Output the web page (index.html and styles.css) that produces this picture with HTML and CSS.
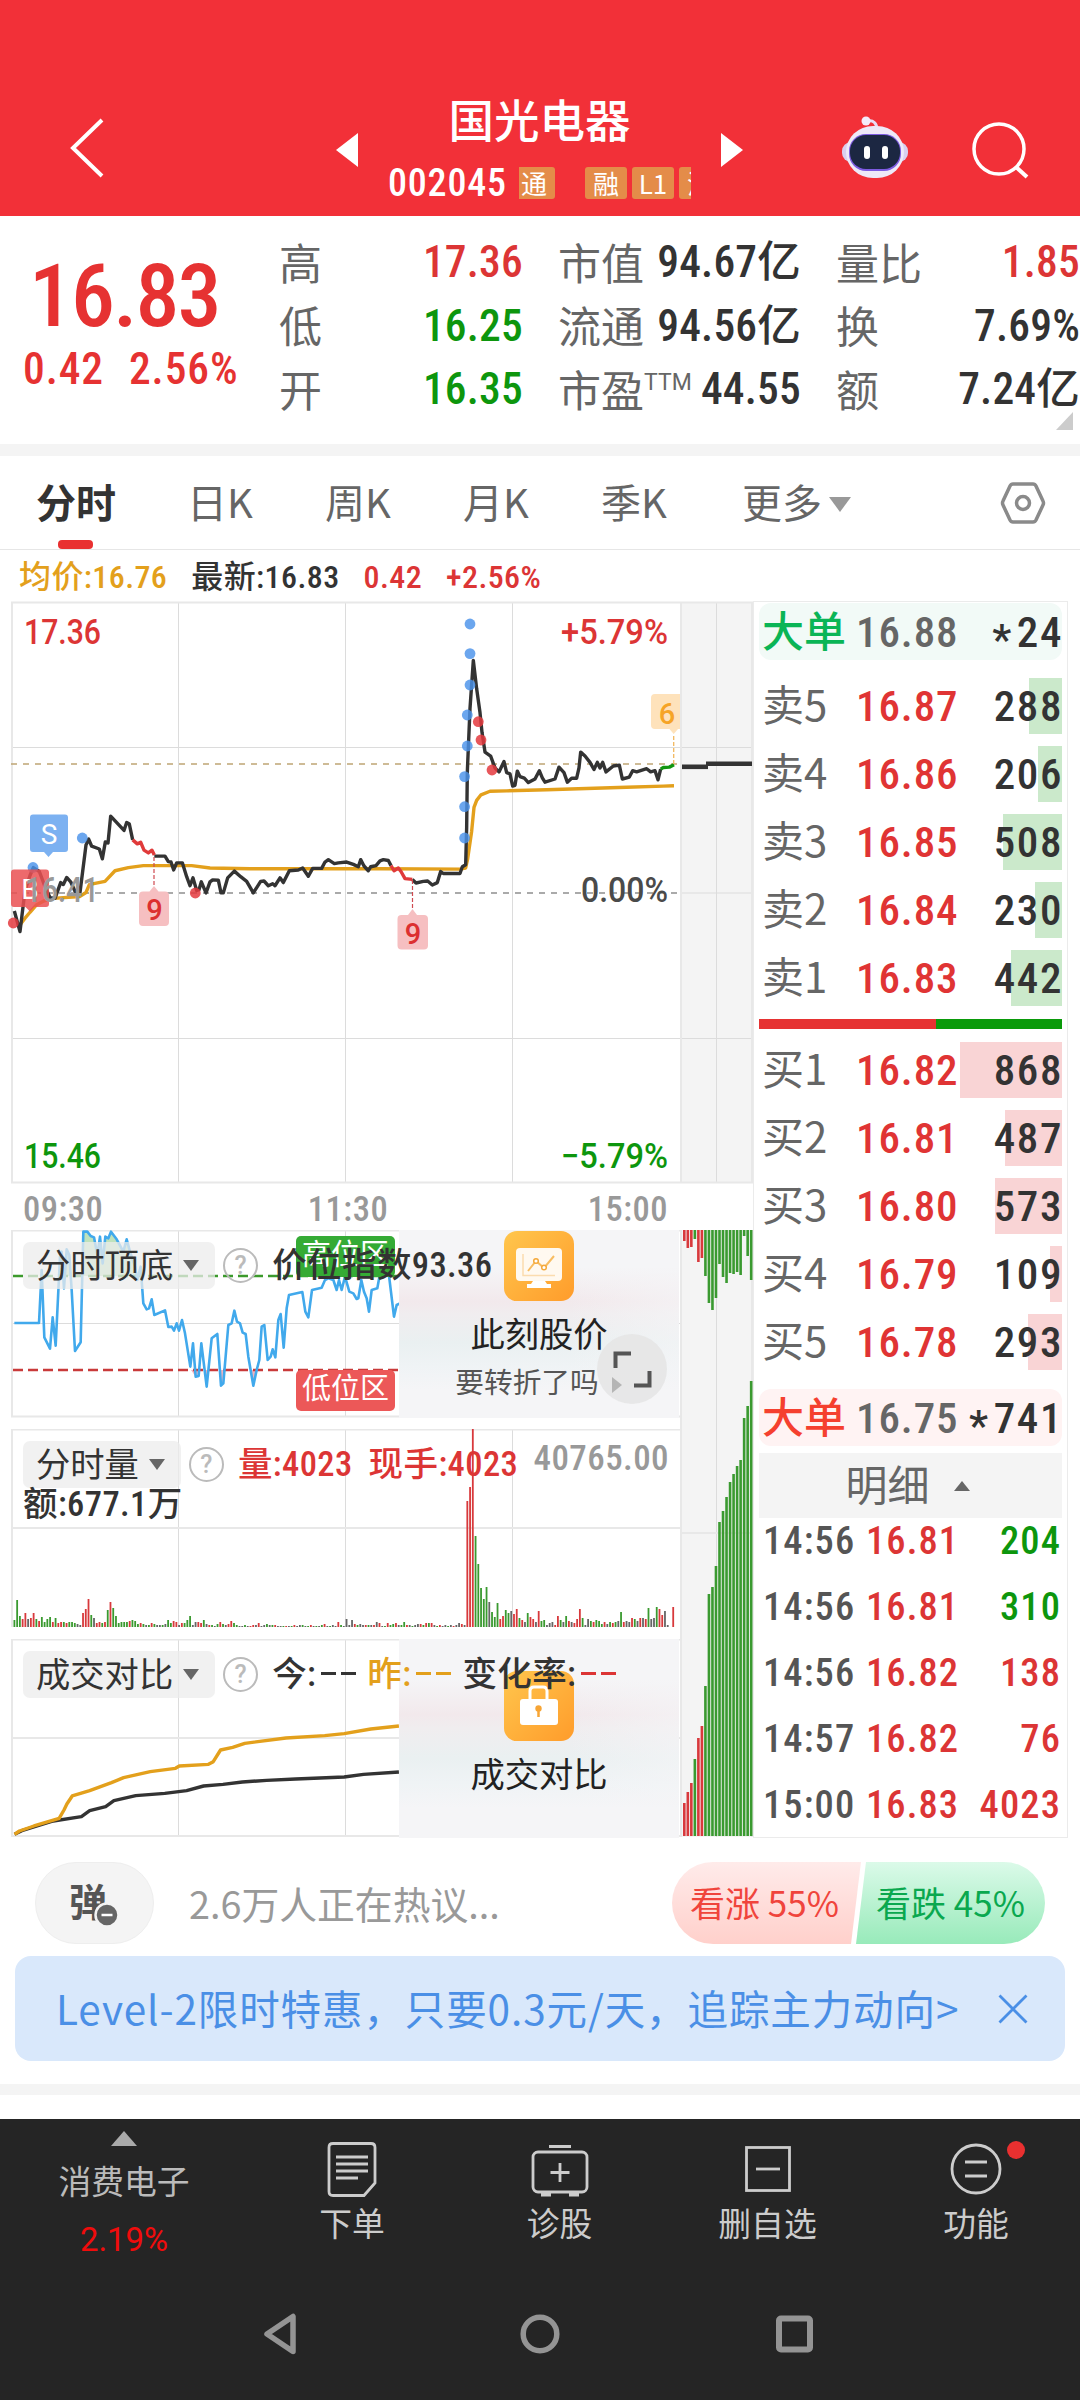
FILE: index.html
```html
<!DOCTYPE html>
<html lang="zh-CN">
<head>
    <meta charset="UTF-8">
    <meta name="viewport" content="width=device-width, initial-scale=1.0">
    <title>国光电器 002045</title>
    <link rel="stylesheet" href="styles.css">
</head>
<body>
    <div class="app">
        <!-- 顶部栏 -->
        <header class="header">
            <svg class="back" width="40" height="64" viewBox="0 0 40 64"><path d="M35 4L6 32L35 60" fill="none" stroke="#fff" stroke-width="4"/></svg>
            <svg class="prev" width="22" height="34" viewBox="0 0 22 34"><path d="M22 0V34L0 17Z" fill="#fff"/></svg>
            <div class="stock">
                <h1>国光电器</h1>
                <div class="stock-code">
                    <span class="num">002045</span>
                    <div class="chips">
                        <i class="chip chip-cut">通</i>
                        <i class="chip">融</i>
                        <i class="chip">L1</i>
                        <i class="chip">沪</i>
                    </div>
                </div>
            </div>
            <svg class="next" width="22" height="34" viewBox="0 0 22 34"><path d="M0 0V34L22 17Z" fill="#fff"/></svg>
            <svg class="robot" width="68" height="64" viewBox="0 0 68 64">
                <path d="M36 14C36 7 32 4 27 5" fill="none" stroke="#e8ddf5" stroke-width="3"/>
                <circle cx="25" cy="5" r="4.5" fill="#f4ecfa"/>
                <rect x="1" y="26" width="66" height="20" rx="9" fill="#d9cff0"/>
                <rect x="5" y="10" width="58" height="52" rx="27" fill="#eee9f8"/>
                <rect x="8" y="18" width="52" height="37" rx="17" fill="#7d5be0"/>
                <rect x="9" y="19" width="50" height="34" rx="16" fill="#1c2742"/>
                <rect x="23" y="30" width="6" height="13" rx="3" fill="#fff"/>
                <rect x="41" y="30" width="6" height="13" rx="3" fill="#fff"/>
            </svg>
            <svg class="search" width="58" height="58" viewBox="0 0 58 58"><circle cx="28" cy="28" r="25" fill="none" stroke="#fff" stroke-width="3.5"/><path d="M45 46L56 56" stroke="#fff" stroke-width="4"/></svg>
        </header>

        <!-- 行情 -->
        <section class="quote">
            <div class="price">
                <div class="price-now num">16.83</div>
                <div class="price-chg num"><span>0.42</span><span>2.56%</span></div>
            </div>
            <div class="stats">
                <div class="stat"><span>高</span><b class="num red">17.36</b></div>
                <div class="stat"><span>市值</span><b class="num">94.67亿</b></div>
                <div class="stat"><span>量比</span><b class="num red">1.85</b></div>
                <div class="stat"><span>低</span><b class="num green">16.25</b></div>
                <div class="stat"><span>流通</span><b class="num">94.56亿</b></div>
                <div class="stat"><span>换</span><b class="num">7.69%</b></div>
                <div class="stat"><span>开</span><b class="num green">16.35</b></div>
                <div class="stat"><span>市盈<sup>TTM</sup></span><b class="num">44.55</b></div>
                <div class="stat"><span>额</span><b class="num">7.24亿</b></div>
            </div>
            <i class="corner"></i>
        </section>

        <!-- 周期切换 -->
        <nav class="tabs">
            <a class="tab active">分时</a>
            <a class="tab">日K</a>
            <a class="tab">周K</a>
            <a class="tab">月K</a>
            <a class="tab">季K</a>
            <a class="tab more">更多<i class="down"></i></a>
            <svg class="setting" width="46" height="42" viewBox="0 0 46 42"><path d="M13 2H33Q35 2 36 4L43 19Q44 21 43 23L36 38Q35 40 33 40H13Q11 40 10 38L3 23Q2 21 3 19L10 4Q11 2 13 2Z" fill="none" stroke="#8a8a8a" stroke-width="3.5"/><circle cx="23" cy="21" r="6.5" fill="none" stroke="#8a8a8a" stroke-width="3.5"/></svg>
        </nav>

        <div class="info num">
            <span class="orange">均价:16.76</span>
            <span>最新:16.83</span>
            <span class="red">0.42</span>
            <span class="red">+2.56%</span>
        </div>

        <main class="trade">
            <div class="charts">
                <!-- 分时图 -->
                <svg class="main-chart" width="753" height="583" viewBox="0 601 753 583">
                    <rect x="680" y="602" width="73" height="581" fill="#f4f4f4"/>
                    <g class="grid">
                        <path d="M178.5 602V1183M345.5 602V1183M512.5 602V1183M716.5 602V1183M11 747.5H753M681 893H753M11 1038.5H753"/>
                        <path class="frame" d="M11 602.5H753M12 602V1183M681 602V1183M752 602V1183M11 1182.5H753"/>
                    </g>
                    <path d="M11 764H680" class="dash" stroke="#bfa574"/>
                    <path d="M11 893H680" class="dash" stroke="#8f8f8f"/>
                    <g class="lines" transform="translate(0 590) scale(.33333 .3954)">
                        <polyline stroke="#e3a01c" points="62,845 75,830 90,815 110,796 130,787 160,780 240,775 258,765 268,745 285,742 315,737 345,710 385,702 430,697 575,697 630,703 750,705 1140,705 1380,706 1397,703 1403,680 1415,610 1422,550 1430,532 1443,518 1470,509 1520,508 1640,505 1760,502 1880,499 1990,496 2022,495"/>
                        <polyline stroke="#333" points="43,812 60,864 75,760 90,722 100,702 118,712 135,750 150,778 165,780 182,740 190,745 200,727 212,738 225,762 240,765 258,645 266,630 275,648 298,655 307,680 316,637 324,640 332,572 372,608 380,588 388,592 398,632"/>
                        <polyline stroke="#333" points="463,673 495,673 505,687 513,688 521,708 530,690 547,690 560,725 570,748 579,728 590,760 597,758 604,738 618,766 630,738 638,733 655,734 663,766 670,766 683,728 703,711 722,725 740,737 760,766 782,737 792,736 805,748 818,743 825,748 840,728 850,740 868,710 895,708 908,703 925,724 938,704 965,704 975,688 985,682 1003,692 1015,690 1040,688 1060,694 1075,700 1082,682 1092,698 1105,710 1112,700 1128,697 1140,685 1150,682 1165,684 1173,697"/>
                        <polyline stroke="#333" points="1237,732 1248,741 1270,737 1283,736 1297,746 1312,740 1322,712 1330,717 1380,717 1387,700 1397,695 1400,600 1402,460 1410,300 1420,178 1430,250 1440,310 1446,360 1455,410 1472,420 1485,450 1497,460 1512,434 1520,462 1530,465 1538,496 1545,494 1552,458 1560,472 1573,476 1585,487 1605,478 1618,457 1627,475 1635,486 1665,478 1677,448 1692,462 1702,486 1715,476 1730,476 1737,450 1742,410 1755,420 1770,436 1782,454 1792,436 1800,450 1808,436 1818,460 1840,445 1858,443 1867,478 1888,473 1898,457 1910,460 1940,452 1952,460 1965,457 1974,480 1982,453"/>
                        <polyline stroke="#e03a3a" points="398,632 412,642 422,638 432,658 445,665 456,658 463,670"/>
                        <polyline stroke="#e03a3a" points="1173,697 1182,710 1195,703 1203,712 1215,730 1237,732"/>
                        <polyline stroke="#12960f" points="1982,453 1990,449 2008,448 2022,442"/>
                    </g>
                    <path d="M682 766.8H708" stroke="#333" stroke-width="4.6"/>
                    <path d="M706 763.8H752" stroke="#333" stroke-width="4.6"/>
                    <g fill="#4a92ea" fill-opacity=".82">
                        <circle cx="33" cy="867.5" r="5.4"/><circle cx="82.3" cy="838" r="5.4"/>
                        <circle cx="470" cy="624" r="5.4"/><circle cx="470" cy="653.6" r="5.4"/>
                        <circle cx="470" cy="685" r="5.4"/><circle cx="467.3" cy="715" r="5.4"/>
                        <circle cx="467.3" cy="746" r="5.4"/><circle cx="464.6" cy="776.6" r="5.4"/>
                        <circle cx="464.6" cy="806.7" r="5.4"/><circle cx="464.6" cy="838" r="5.4"/>
                    </g>
                    <g fill="#e43a3e" fill-opacity=".85">
                        <circle cx="13.3" cy="923" r="5.4"/><circle cx="195.3" cy="893" r="5.4"/>
                        <circle cx="478.3" cy="721.7" r="5.4"/><circle cx="481" cy="740" r="5.4"/><circle cx="492" cy="770" r="5.4"/>
                    </g>
                    <!-- 买卖点标记 -->
                    <path d="M33 814.5H65Q68 814.5 68 817.5V849Q68 852 65 852H53L48.5 857L44 852H33Q30 852 30 849V817.5Q30 814.5 33 814.5Z" fill="#6ea8f0" fill-opacity=".9"/>
                    <text x="49" y="843.5" font-size="28" fill="#fff" text-anchor="middle">S</text>
                    <path d="M14 869.5H46Q49 869.5 49 872.5V904Q49 907 46 907H34.5L30 911.5L25.5 907H14Q11 907 11 904V872.5Q11 869.5 14 869.5Z" fill="#ea5052" fill-opacity=".85"/>
                    <text x="30" y="898.5" font-size="28" fill="#fff" text-anchor="middle">B</text>
                    <path d="M154 857V886M412.5 880V909" stroke="#cf4a50" stroke-width="1.2" stroke-dasharray="4 2"/>
                    <path d="M143 891.5H149.5L154 886L158.5 891.5H165Q169 891.5 169 895.5V922Q169 926 165 926H143Q139 926 139 922V895.5Q139 891.5 143 891.5Z" fill="#f6bfc1"/>
                    <path d="M401.5 915H408L412.5 909L417 915H424Q428 915 428 919V945.5Q428 949.5 424 949.5H401.5Q397.5 949.5 397.5 945.5V919Q397.5 915 401.5 915Z" fill="#f6bfc1"/>
                    <text x="154.5" y="919.5" font-size="29" class="mid red-t" text-anchor="middle">9</text>
                    <text x="413" y="943.5" font-size="29" class="mid red-t" text-anchor="middle">9</text>
                    <path d="M673.7 736V765" stroke="#f2b860" stroke-width="1.3" stroke-dasharray="4 2"/>
                    <path d="M655 694H680V729H678L673.7 734L669.5 729H655Q651 729 651 725V698Q651 694 655 694Z" fill="#fee2bb"/>
                    <text x="667" y="723.5" font-size="29" class="mid" fill="#f6a426" text-anchor="middle">6</text>
                    <g class="mid" font-size="35">
                        <text x="24" y="644" fill="#dc3535" textLength="77" lengthAdjust="spacingAndGlyphs">17.36</text>
                        <text x="561" y="644" fill="#dc3535" textLength="107" lengthAdjust="spacingAndGlyphs">+5.79%</text>
                        <text x="25" y="901.5" fill="#999" textLength="74" lengthAdjust="spacingAndGlyphs">16.41</text>
                        <text x="581" y="901.5" fill="#4a4a4a" textLength="87" lengthAdjust="spacingAndGlyphs">0.00%</text>
                        <text x="24" y="1168" fill="#0d960d" textLength="77" lengthAdjust="spacingAndGlyphs">15.46</text>
                        <text x="561" y="1168" fill="#0d960d" textLength="107" lengthAdjust="spacingAndGlyphs">−5.79%</text>
                    </g>
                </svg>
                <div class="axis num"><span>09:30</span><span>11:30</span><span>15:00</span></div>

                <div class="subs">
                    <div class="panels">
                        <!-- 分时顶底 -->
                        <div class="panel p1">
                            <svg width="680" height="188" viewBox="0 1230 680 188">
                                <g class="grid">
                                    <path d="M178.5 1230V1417M345.5 1230V1417M512.5 1230V1417M11 1323.5H680"/>
                                    <path class="frame" d="M11 1230.5H680M12 1230V1417M11 1416.5H680"/>
                                </g>
                                <g transform="translate(0 1180) scale(.33333)">
                                    <path fill="#a9d8a6" fill-opacity=".75" d="M245 288L250 155L262 155L272 168L282 172L292 225L300 170L308 250L316 170L325 175L333 155L350 178L370 215L380 178L390 215L405 260L410 288ZM181 288L185 215L190 288ZM194 288L200 208L208 225L212 288Z"/>
                                    <path fill="#f0b4c0" d="M573 570L587 590L596 588L599 570ZM612 570L620 620L626 570ZM658 570L663 617L670 610L674 570ZM752 570L760 617L770 570Z"/>
                                </g>
                                <path d="M13 1276H400" stroke="#3c9a2c" stroke-width="2.6" stroke-dasharray="10 5"/>
                                <path d="M13 1370H400" stroke="#c93a3a" stroke-width="2.6" stroke-dasharray="10 5"/>
                                <g class="lines thin" transform="translate(0 1180) scale(.33333)">
                                    <polyline stroke="#41a9ec" points="43,429 117,429 125,270 133,472 150,506 158,412 167,497 180,230 185,215 192,325 200,208 208,225 215,330 225,513 242,487 250,155 262,155 272,168 282,172 292,225 300,170 308,250 316,170 325,175 333,155 350,178 370,215 380,178 390,215 405,260 412,300 422,260 430,370 440,388 447,385 455,358 463,405 495,391 505,441 515,440 522,452 530,430 537,452 546,420 555,460 571,560 579,490 587,590 596,588 604,490 620,620 635,475 652,462 663,617 670,610 685,435 695,430 703,392 711,425 720,430 728,458 737,462 745,530 760,617 770,570 778,540 785,440 793,435 803,540 812,530 818,508 826,532 835,420 842,402 851,503 860,385 867,345 907,336 916,395 925,412 936,330 965,323 975,300 985,295 1000,300 1010,330 1017,300 1025,330 1035,290 1048,335 1060,340 1070,357 1075,355 1084,300 1092,335 1100,355 1107,395 1115,330 1132,325 1142,270 1165,270 1182,410 1190,375 1200,370"/>
                                </g>
                            </svg>
                            <span class="zone high">高位区</span>
                            <span class="zone low">低位区</span>
                            <div class="card">
                                <svg width="70" height="70" viewBox="0 0 70 70">
                                    <defs><linearGradient id="og" x1="0" y1="0" x2="1" y2="1"><stop offset="0" stop-color="#ffc64d"/><stop offset="1" stop-color="#ff9c2b"/></linearGradient></defs>
                                    <rect width="70" height="70" rx="13" fill="url(#og)"/>
                                    <rect x="12" y="17" width="46" height="33" rx="4" fill="#fff9f0"/>
                                    <path d="M29 50H41L43 53H47V57H23V53H27Z" fill="#fff"/>
                                    <path d="M19 23V44.5H51" fill="none" stroke="#fbdcae" stroke-width="1.5"/>
                                    <path d="M24 40L32 30L40 37L50 25" fill="none" stroke="#f8bd62" stroke-width="2"/>
                                    <circle cx="32" cy="30" r="2.3" fill="#fff" stroke="#f5a93a" stroke-width="1.5"/><circle cx="40" cy="36.5" r="2.3" fill="#fff" stroke="#f5a93a" stroke-width="1.5"/>
                                </svg>
                                <strong>此刻股价</strong>
                                <em>要转折了吗</em>
                            </div>
                            <div class="panel-head">
                                <span class="pill"><span>分时顶底</span><i class="down"></i></span>
                                <i class="help">?</i>
                                <span class="num val">价位指数93.36</span>
                            </div>
                            <svg class="expand" width="70" height="70" viewBox="0 0 70 70"><circle cx="35" cy="35" r="35" fill="#e6e6e6" fill-opacity=".9"/><path d="M15 43L25 51L15 59Z" fill="#b5b5b5"/><path d="M18.5 34V19.5H34M52.5 37V51.5H37" fill="none" stroke="#555" stroke-width="4"/></svg>
                        </div>
                        <!-- 分时量 -->
                        <div class="panel p2">
                            <svg width="680" height="199" viewBox="0 1429 680 199">
                                <g class="grid">
                                    <path d="M178.5 1429V1627M345.5 1429V1627M512.5 1429V1627"/>
                                    <path class="frame" d="M11 1429.5H680M12 1429V1627M11 1528H680"/>
                                </g>
                                <g id="volume"></g>
                            </svg>
                            <div class="panel-head">
                                <span class="pill"><span>分时量</span><i class="down"></i></span>
                                <i class="help">?</i>
                                <span class="num val red">量:4023</span>
                                <span class="num val red now">现手:4023</span>
                            </div>
                            <span class="num val amount">额:677.1万</span>
                            <span class="num max">40765.00</span>
                        </div>
                        <!-- 成交对比 -->
                        <div class="panel p3">
                            <svg width="680" height="199" viewBox="0 1639 680 199">
                                <g class="grid">
                                    <path d="M178.5 1639V1837M345.5 1639V1837"/>
                                    <path class="frame" d="M11 1639.5H680M12 1639V1837M11 1738H680M11 1836H680"/>
                                </g>
                                <g class="lines" transform="translate(0 1500) scale(.4847 .33333)">
                                    <polyline stroke="#333" points="30,1003 45,992 110,963 168,950 185,932 218,920 235,902 280,887 340,880 385,872 420,858 460,853 500,846 550,841 610,837 710,831 750,823 823,816"/>
                                    <polyline stroke="#e3a01c" points="30,1003 40,993 70,978 122,955 132,930 138,912 149,888 185,872 230,848 255,833 310,815 362,805 370,798 430,793 440,785 455,750 480,742 505,730 590,714 670,707 710,701 765,687 823,678"/>
                                </g>
                            </svg>
                            <div class="card lock">
                                <svg width="70" height="70" viewBox="0 0 70 70">
                                    <rect width="70" height="70" rx="13" fill="url(#og)"/>
                                    <path d="M26 30V20Q26 16 30 16H39Q43 16 43 20V30" fill="none" stroke="#fff" stroke-width="3"/>
                                    <rect x="16" y="28" width="38" height="26" rx="3" fill="#fff"/>
                                    <circle cx="34.5" cy="37.5" r="3.2" fill="#f7a535"/><path d="M34.5 37V46" stroke="#f7a535" stroke-width="2.5"/>
                                </svg>
                                <strong>成交对比</strong>
                            </div>
                            <div class="panel-head">
                                <span class="pill"><span>成交对比</span><i class="down"></i></span>
                                <i class="help">?</i>
                                <span class="num val cmp">今:<s></s><s></s></span>
                                <span class="num val cmp orange">昨:<s></s><s></s></span>
                                <span class="num val cmp">变化率:<s class="redbar"></s><s class="redbar"></s></span>
                            </div>
                        </div>
                    </div>
                    <!-- 集合竞价 -->
                    <svg class="auction" width="73" height="608" viewBox="680 1230 73 608">
                        <rect x="680" y="1230" width="73" height="607" fill="#f4f4f4"/>
                        <g class="grid">
                            <path d="M716.5 1230V1837"/>
                            <path class="frame" d="M681 1230V1837M752 1230V1837M681 1533H753"/>
                        </g>
                        <g id="auction"></g>
                    </svg>
                </div>
            </div>

            <!-- 五档盘口 -->
            <aside class="book">
                <div class="big sell"><span>大单</span><b class="num">16.88</b><b class="num qty"><i>*</i>24</b></div>
                <div class="levels">
                    <div class="level sell"><span>卖5</span><b class="num">16.87</b><b class="num qty">288</b><u style="width:33px"></u></div>
                    <div class="level sell"><span>卖4</span><b class="num">16.86</b><b class="num qty">206</b><u style="width:24px"></u></div>
                    <div class="level sell"><span>卖3</span><b class="num">16.85</b><b class="num qty">508</b><u style="width:59px"></u></div>
                    <div class="level sell"><span>卖2</span><b class="num">16.84</b><b class="num qty">230</b><u style="width:27px"></u></div>
                    <div class="level sell"><span>卖1</span><b class="num">16.83</b><b class="num qty">442</b><u style="width:51px"></u></div>
                </div>
                <div class="ratio"><i style="width:58.3%"></i></div>
                <div class="levels buys">
                    <div class="level buy"><span>买1</span><b class="num">16.82</b><b class="num qty">868</b><u style="width:102px"></u></div>
                    <div class="level buy"><span>买2</span><b class="num">16.81</b><b class="num qty">487</b><u style="width:57px"></u></div>
                    <div class="level buy"><span>买3</span><b class="num">16.80</b><b class="num qty">573</b><u style="width:67px"></u></div>
                    <div class="level buy"><span>买4</span><b class="num">16.79</b><b class="num qty">109</b><u style="width:12px"></u></div>
                    <div class="level buy"><span>买5</span><b class="num">16.78</b><b class="num qty">293</b><u style="width:34px"></u></div>
                </div>
                <div class="big buy"><span>大单</span><b class="num">16.75</b><b class="num qty"><i>*</i>741</b></div>
                <div class="detail-head"><span>明细</span><i class="up"></i></div>
                <div class="details num">
                    <div><span>14:56</span><b>16.81</b><b class="green">204</b></div>
                    <div><span>14:56</span><b>16.81</b><b class="green">310</b></div>
                    <div><span>14:56</span><b>16.82</b><b>138</b></div>
                    <div><span>14:57</span><b>16.82</b><b>76</b></div>
                    <div><span>15:00</span><b>16.83</b><b>4023</b></div>
                </div>
            </aside>
        </main>

        <!-- 热议 -->
        <section class="talk">
            <div class="danmu">弹<svg width="26" height="26" viewBox="0 0 26 26"><circle cx="13" cy="13" r="11.5" fill="#666" stroke="#f4f4f4" stroke-width="2.5"/><path d="M7.5 13H18.5" stroke="#fff" stroke-width="2.5"/></svg></div>
            <span class="talk-text">2.6万人正在热议...</span>
            <div class="vote">
                <span class="vote-up">看涨 55%</span>
                <span class="vote-down">看跌 45%</span>
            </div>
        </section>

        <div class="banner">
            <span>Level-2限时特惠，只要0.3元/天，追踪主力动向&gt;</span>
            <svg width="30" height="30" viewBox="0 0 30 30"><path d="M1.5 1.5L28.5 28.5M28.5 1.5L1.5 28.5" stroke="#4a8fe6" stroke-width="2.8"/></svg>
        </div>
        <div class="gap"></div>

        <!-- 底部栏 -->
        <footer class="bottom">
            <div class="menu">
                <div class="menu-item sector"><i class="up"></i><span>消费电子</span><b>2.19%</b></div>
                <div class="menu-item">
                    <svg width="60" height="60" viewBox="0 0 60 60" fill="none" stroke="#ccc" stroke-width="2.8"><path d="M11 4.5H49Q53 4.5 53 8.5V44L42 56.5H11Q7 56.5 7 52.5V8.5Q7 4.5 11 4.5Z"/><path d="M14 18H46M14 25H46M14 32H46M14 39H36"/></svg>
                    <span>下单</span>
                </div>
                <div class="menu-item">
                    <svg width="60" height="60" viewBox="0 0 60 60" fill="none" stroke="#ccc" stroke-width="2.8"><rect x="3" y="13" width="54" height="40" rx="5"/><path d="M19 7.5H41M30 24V43M20.5 33.5H39.5"/><path d="M11 55.5H21M39 55.5H49" stroke-width="4"/></svg>
                    <span>诊股</span>
                </div>
                <div class="menu-item">
                    <svg width="60" height="60" viewBox="0 0 60 60" fill="none" stroke="#ccc" stroke-width="2.8"><rect x="8.5" y="8.5" width="43" height="43"/><path d="M18 30H42"/></svg>
                    <span>删自选</span>
                </div>
                <div class="menu-item func">
                    <svg width="60" height="60" viewBox="0 0 60 60" fill="none" stroke="#ccc" stroke-width="2.8"><circle cx="30" cy="30" r="24"/><path d="M19 23H41M19 37H41"/></svg>
                    <span>功能</span>
                    <i class="dot"></i>
                </div>
            </div>
            <div class="sysnav">
                <svg width="44" height="44" viewBox="0 0 44 44"><path d="M31 4.5V39.5L5 22Z" fill="none" stroke="#949494" stroke-width="5.5" stroke-linejoin="round"/></svg>
                <svg width="44" height="44" viewBox="0 0 44 44"><circle cx="22" cy="22" r="16.8" fill="none" stroke="#949494" stroke-width="5.5"/></svg>
                <svg width="44" height="44" viewBox="0 0 44 44"><rect x="5" y="6.5" width="31" height="31" rx="2" fill="none" stroke="#949494" stroke-width="6"/></svg>
            </div>
        </footer>
    </div>
    <script src="script.js"></script>
</body>
</html>
```
FILE: styles.css
```css
* {
    box-sizing: border-box;
}
body {
    margin: 0;
    background: #fff;
    color: #333;
    font-family: "Noto Sans CJK SC", sans-serif;
}
i, em {
    font-style: normal;
}
b {
    font-weight: 500;
}
svg {
    display: block;
}
.app {
    width: 1080px;
    height: 2400px;
    overflow: hidden;
}
.num {
    font-family: Roboto, "Noto Sans CJK SC", sans-serif;
    font-stretch: 87%;
    font-weight: 500;
    white-space: nowrap;
}
.red {
    color: #dc3535;
}
.green {
    color: #0d960d;
}
.orange {
    color: #e3a01c;
}

/* header */
.header {
    display: flex;
    align-items: flex-start;
    height: 216px;
    background: #f23038;
    color: #fff;
}
.back {
    margin: 116px 0 0 67px;
}
.prev {
    margin: 133px 0 0 229px;
}
.stock {
    width: 363px;
    padding-top: 85px;
}
.stock h1 {
    margin: 0;
    font-size: 45.5px;
    font-weight: 500;
    line-height: 66px;
    text-align: center;
}
.stock-code {
    display: flex;
    align-items: center;
    margin: 11px 0 0 30px;
    height: 42px;
    font-size: 38px;
    letter-spacing: .8px;
    line-height: 46px;
}
.stock-code .num {
    width: 119px;
}
.chips {
    display: flex;
    gap: 5px;
    width: 172px;
    margin-left: 12px;
    overflow: hidden;
}
.chip {
    flex: none;
    width: 42px;
    height: 32px;
    border-radius: 3px;
    background: #e48c49;
    font-size: 26px;
    letter-spacing: 0;
    line-height: 31px;
    text-align: center;
}
.chip-cut {
    margin: 0 25px 0 -6px;
}
.next {
    margin-top: 133px;
}
.robot {
    margin: 116px 0 0 98px;
}
.search {
    margin: 121px 0 0 62px;
}

/* quote */
.quote {
    position: relative;
    display: flex;
    height: 240px;
    border-bottom: 12px solid #f4f4f4;
}
.price {
    width: 280px;
    color: #e63232;
}
.price-now {
    margin: 30px 0 0 29px;
    font-size: 88px;
    letter-spacing: -2px;
    line-height: 100px;
}
.price-chg {
    display: flex;
    gap: 25px;
    padding: 0 0 0 23px;
    font-size: 43.5px;
    letter-spacing: .9px;
    line-height: 48px;
}
.stats {
    display: grid;
    grid-template-columns: 244px 243px 244px;
    grid-auto-rows: 63.5px;
    column-gap: 35px;
    padding-top: 15px;
}
.stat {
    display: flex;
    justify-content: space-between;
    align-items: center;
    font-size: 43px;
    line-height: 60px;
    white-space: nowrap;
    color: #333;
}
.stat span {
    margin-top: -4px;
    color: #666;
}
.stat b {
    margin-top: 1px;
    font-size: 43.5px;
    letter-spacing: .2px;
}
.stat .red {
    color: #dc3535;
}
.stat .green {
    color: #0d960d;
}
.stat sup {
    font-family: Roboto, sans-serif;
    font-size: 23px;
    line-height: 1;
    vertical-align: 17px;
}
.corner {
    position: absolute;
    right: 7px;
    bottom: 14px;
    border: solid transparent;
    border-width: 0 0 18px 17px;
    border-bottom-color: #ccc;
}

/* tabs */
.tabs {
    display: flex;
    height: 94px;
    border-bottom: 1px solid #e6e6e6;
}
.tab {
    position: relative;
    width: 138px;
    padding-left: 48px;
    font-size: 40px;
    line-height: 90px;
    color: #666;
    white-space: nowrap;
}
.tab:first-child {
    width: 139px;
    padding-left: 36px;
}
.tab.active {
    color: #333;
    font-weight: 700;
}
.active::after {
    content: "";
    position: absolute;
    left: 58px;
    bottom: 0;
    width: 35px;
    height: 9px;
    border-radius: 4px;
    background: #e93030;
}
.tabs .more {
    width: 164px;
    padding-left: 51px;
}
.down, .up {
    display: inline-block;
    border: solid transparent;
}
.down {
    border-width: 11px 8px 0;
    border-top-color: #666;
}
.up {
    border-width: 0 8px 10px;
    border-bottom-color: #666;
}
.more .down {
    margin-left: 7px;
    border-width: 15px 11px 0;
    border-top-color: #999;
    vertical-align: 6px;
}
.setting {
    margin: 26px 0 0 145px;
}

.info {
    display: flex;
    gap: 24px;
    height: 51px;
    padding-left: 19px;
    font-size: 32px;
    letter-spacing: .4px;
    line-height: 54px;
}

/* charts */
.trade {
    display: flex;
    height: 1238px;
}
.charts {
    width: 753px;
}
.grid path {
    fill: none;
    stroke: #dcdcdc;
    stroke-width: 1;
}
.grid .frame {
    stroke: #e8e8e8;
    stroke-width: 2;
}
.dash {
    stroke-width: 1.6;
    stroke-dasharray: 6 6;
}
.lines polyline {
    fill: none;
    stroke-width: 3.4;
    stroke-linejoin: round;
    vector-effect: non-scaling-stroke;
}
.thin polyline {
    stroke-width: 2.6;
}
.main-chart text {
    font-family: Roboto, sans-serif;
}
.main-chart .mid {
    font-weight: 500;
}
.red-t {
    fill: #dc3030;
}
.axis {
    display: flex;
    justify-content: space-between;
    width: 680px;
    height: 46px;
    padding: 0 12px 0 23px;
    font-size: 34.5px;
    letter-spacing: .5px;
    line-height: 50px;
    color: #999;
}
.axis span:nth-child(2) {
    margin-left: 5px;
}
.subs {
    display: flex;
}
.panels {
    display: flex;
    flex-direction: column;
    gap: 11px;
    width: 680px;
}
.panel {
    position: relative;
}
.panel-head {
    position: absolute;
    left: 23px;
    top: 12px;
    display: flex;
    align-items: center;
    height: 47px;
    white-space: nowrap;
}
.pill {
    display: flex;
    align-items: center;
    gap: 10px;
    height: 47px;
    padding: 0 16px 0 13px;
    border-radius: 7px;
    background: rgba(236, 236, 236, .75);
    font-size: 34.3px;
    line-height: 47px;
}
.pill span {
    margin-top: -4px;
}
.help {
    width: 35px;
    height: 35px;
    margin: 0 14px 0 8px;
    border: 2.5px solid #bbb;
    border-radius: 50%;
    font: 500 25px/31px Roboto, sans-serif;
    text-align: center;
    color: #bbb;
}
.val {
    font-size: 34.5px;
    letter-spacing: .4px;
    line-height: 49px;
}
.now {
    margin-left: 16px;
}
.amount {
    position: absolute;
    left: 23px;
    top: 51px;
}
.max {
    position: absolute;
    right: 11px;
    top: 8px;
    font-size: 35px;
    letter-spacing: .4px;
    line-height: 44px;
    color: #999;
}
.zone {
    position: absolute;
    left: 296px;
    width: 99px;
    height: 41px;
    border-radius: 5px;
    color: #fff;
    font-size: 29px;
    line-height: 32px;
    text-align: center;
}
.high {
    top: 6px;
    background: #35ab35;
}
.low {
    top: 140px;
    background: #ec5858;
}
.card {
    position: absolute;
    left: 399px;
    top: 0;
    display: flex;
    flex-direction: column;
    align-items: center;
    width: 280px;
    height: 188px;
    padding-top: 1px;
    background:
        linear-gradient(90deg, rgba(245, 245, 247, 0) 60%, rgba(245, 245, 247, .6)),
        linear-gradient(rgba(245, 245, 247, 0) 20%, #f2e9ec 38%, #f0edef 45%, #eaf0f1 60%, #eff3f5 72%, rgba(245, 245, 247, 0) 85%),
        #f5f5f7;
    color: #222;
}
.card strong {
    margin-top: 7px;
    font-size: 34.3px;
    font-weight: 400;
    line-height: 48px;
}
.card em {
    padding-right: 24px;
    font-size: 28.7px;
    line-height: 50px;
    color: #555;
}
.lock {
    height: 199px;
    padding-top: 32px;
}
.expand {
    position: absolute;
    left: 597px;
    top: 104px;
}
.cmp {
    margin-right: 11px;
}
.cmp s {
    display: inline-block;
    width: 15px;
    height: 3px;
    margin: 0 0 11px 5px;
    background: currentColor;
}
.cmp .redbar {
    background: #dc3535;
}

/* order book */
.book {
    width: 315px;
    height: 1237px;
    padding: 1px 5px 0;
    border: 1px solid #ebebeb;
}
.big, .level {
    position: relative;
    display: flex;
    align-items: center;
    height: 56px;
    padding-left: 3px;
    font-size: 42px;
    line-height: 56px;
    color: #666;
    white-space: nowrap;
}
.big .num, .level .num {
    position: relative;
    z-index: 1;
    font-size: 43px;
    letter-spacing: .9px;
}
.level .num {
    color: #e03434;
}
.big span, .level span {
    width: 94px;
    margin-top: -6px;
}
.big {
    height: 57px;
    border-radius: 12px;
}
.big .qty, .level .qty {
    margin: 0 -1px 0 auto;
    letter-spacing: 1.6px;
    color: #333;
}
.big i {
    position: relative;
    top: 7px;
    margin-right: 4px;
}
.big.sell {
    background: #f2faf7;
}
.big.buy {
    margin-top: 19px;
    background: #fff3f3;
}
.big.sell span {
    color: #0ab556;
    font-weight: 500;
}
.big.buy span {
    color: #f5402f;
    font-weight: 500;
}
.levels {
    display: flex;
    flex-direction: column;
    gap: 12px;
    margin-top: 18px;
}
.level u {
    position: absolute;
    right: 0;
    top: 0;
    height: 56px;
}
.sell u {
    background: #cbe9cb;
}
.buy u {
    background: #f9d4d5;
}
.ratio {
    display: flex;
    height: 10px;
    margin-top: 13px;
    background: #0a9a0a;
}
.ratio i {
    background: #e63232;
}
.buys {
    margin-top: 13px;
}
.detail-head {
    display: flex;
    align-items: center;
    justify-content: center;
    gap: 24px;
    height: 65px;
    margin-top: 7px;
    padding-right: 6px;
    background: #f4f4f4;
    font-size: 42px;
    line-height: 60px;
    color: #666;
}
.detail-head span {
    margin-top: -5px;
}
.details {
    letter-spacing: 1.1px;
}
.details div {
    display: flex;
    height: 66px;
    padding: 0 1px 0 4px;
    font-size: 38.5px;
    line-height: 46px;
    color: #555;
}
.details b {
    color: #dc3535;
}
.details span {
    width: 103px;
}
.details b:last-child {
    margin-left: auto;
}
.details .green {
    color: #0d960d;
}

/* talk */
.talk {
    display: flex;
    align-items: center;
    height: 82px;
    margin-top: 23px;
    padding: 0 35px;
}
.danmu {
    position: relative;
    width: 119px;
    height: 82px;
    padding-left: 33px;
    border: 1px solid #eee;
    border-radius: 41px;
    background: #f4f4f4;
    font-size: 38px;
    font-weight: 700;
    line-height: 73px;
    color: #555;
}
.danmu svg {
    position: absolute;
    left: 58px;
    top: 39px;
}
.talk-text {
    margin: -2px 0 0 35px;
    font-size: 37.8px;
    color: #999;
}
.vote {
    display: flex;
    width: 373px;
    margin-left: auto;
}
.vote span {
    height: 82px;
    font-size: 35px;
    line-height: 80px;
    white-space: pre;
}
.vote-up {
    width: 189px;
    padding-left: 18px;
    border-radius: 41px 0 0 41px;
    background: linear-gradient(#ffebea, #ffd0cb);
    clip-path: polygon(0 0, 100% 0, 179px 100%, 0 100%);
    color: #f0443c;
}
.vote-down {
    width: 189px;
    margin-left: -5px;
    padding-left: 20px;
    border-radius: 0 41px 41px 0;
    background: linear-gradient(#dbfae9, #98eaba);
    clip-path: polygon(10px 0, 100% 0, 100% 100%, 0 100%);
    color: #0aa84f;
}

.banner {
    display: flex;
    align-items: center;
    justify-content: space-between;
    height: 105px;
    margin: 12px 15px 23px;
    padding: 0 37px 0 41px;
    border-radius: 16px;
    background: #d9e8fb;
    color: #4a8fe6;
    font-size: 40.5px;
    letter-spacing: .9px;
    white-space: nowrap;
}
.banner span {
    margin-top: -3px;
}
.gap {
    height: 11px;
    margin-bottom: 24px;
    background: #f4f4f4;
}

/* bottom */
.bottom {
    height: 281px;
    background: #252525;
    color: #ccc;
}
.menu {
    display: grid;
    grid-template-columns: 248px 208px 207px 209px 208px;
    height: 170px;
}
.menu-item {
    position: relative;
    display: flex;
    flex-direction: column;
    align-items: center;
    padding-top: 20px;
    font-size: 32.8px;
    line-height: 45px;
}
.sector {
    padding-top: 12px;
    color: #bbb;
}
.sector .up {
    border-width: 0 13px 15px;
    border-bottom-color: #aaa;
    margin-bottom: 11px;
}
.sector b {
    margin-top: 16px;
    font-family: Roboto, sans-serif;
    font-weight: 400;
    color: #f00c0c;
}
.dot {
    position: absolute;
    left: 135px;
    top: 22px;
    width: 18px;
    height: 18px;
    border-radius: 50%;
    background: #e93030;
}
.sysnav {
    display: flex;
    justify-content: center;
    gap: 212px;
    padding-top: 23px;
}
```
FILE: script.js
```js
const NS = 'http://www.w3.org/2000/svg';
const COLORS = { r: '#d8393c', g: '#3a9a30', k: '#666' };

function bar(parent, x, y, w, h, color) {
    const rect = document.createElementNS(NS, 'rect');
    rect.setAttribute('x', x);
    rect.setAttribute('y', y);
    rect.setAttribute('width', w);
    rect.setAttribute('height', h);
    rect.setAttribute('fill', COLORS[color]);
    parent.appendChild(rect);
}

// 每分钟成交量
const volume = ('7g 27g 11g 8r 14r 8k 9r 14r 8g 6r 10g 5g 8g 10g 5r 9g 4r 5r 5g 4r 5g 5g 4g 3k 2k 14r 18r 28r 12g 9k 4r 5r 4g 5r 17g 25r 19g 11g 4g 5g ' +
    '5g 5g 6r 7g 6g 3g 4r 3g 2k 2g 4r 3g 2k 2k 2g 3k 7g 4g 6r 5r 2k 4r 4g 7g 11g 2k 5k 5r 4r 7g 3k 2r 2g 1k 3g 5r 3g 2k 3r 6r ' +
    '4g 2g 1k 1k 2g 1k 1r 2r 2k 4r 1k 2k 3g 2k 2g 2r 1k 1k 1g 1r 1k 1g 2r 1k 2k 2g 1k 1g 2r 1k 1g 1k 2g 3r 1k 1g 2k 1k 5r 2g ' +
    '1k 8k 2k 7k 3r 2g 3k 2k 2r 2g 2k 2r 5k 4r 1k 1g 4r 2g 3g 4r 2k 2g 5g 2r 2k 1g 2k 3k 3r 2g 4r 4g 4r 2k 1g 2r 1k 2k 1g 2k ' +
    '1r 2k 4k 3r 2k 126r 140r 198r 91g 63g 39g 28g 40g 25k 15g 10g 24g 8r 11r 17g 14g 16k 13r 18r 9g 7r 5k 14g 10r 8r 5k 16r 6g 7g 2k 4k 5k 2r 11r 7g ' +
    '5k 11g 6r 5k 4r 8r 18r 9g 2k 8k 6g 5r 7g 6g 3g 5r 3k 5g 4r 5g 6k 15g 5r 6k 5k 9r 8g 6k 9r 9k 8r 19g 8k 9k 20g 18r 12r 16k 2k 0k 20r').split(' ');
const volumeBox = document.getElementById('volume');
volume.forEach((v, i) => {
    const h = parseInt(v);
    bar(volumeBox, 13.5 + i * 2.745, 1627 - h, 1.8, h, v.slice(-1));
});

// 集合竞价
const auctionBox = document.getElementById('auction');
const matched = '11r 18r 17r 9g 32r 28r 46g 73g 80g 68g 34g 47g 53g 43g 44g 42g 45g 6g 26g 50g'.split(' ');
const unmatched = '33r 44r 53r 77g 98r 110r 150g 242g 249g 270g 314g 325g 339g 354g 362g 370g 376g 418g 430g 455g'.split(' ');
matched.forEach((v, i) => {
    const h = parseInt(v);
    bar(auctionBox, 683 + i * 3.52, 1230, 2.6, h, v.slice(-1));
});
unmatched.forEach((v, i) => {
    const h = parseInt(v);
    bar(auctionBox, 683 + i * 3.52, 1836 - h, 2.6, h, v.slice(-1));
});
```
